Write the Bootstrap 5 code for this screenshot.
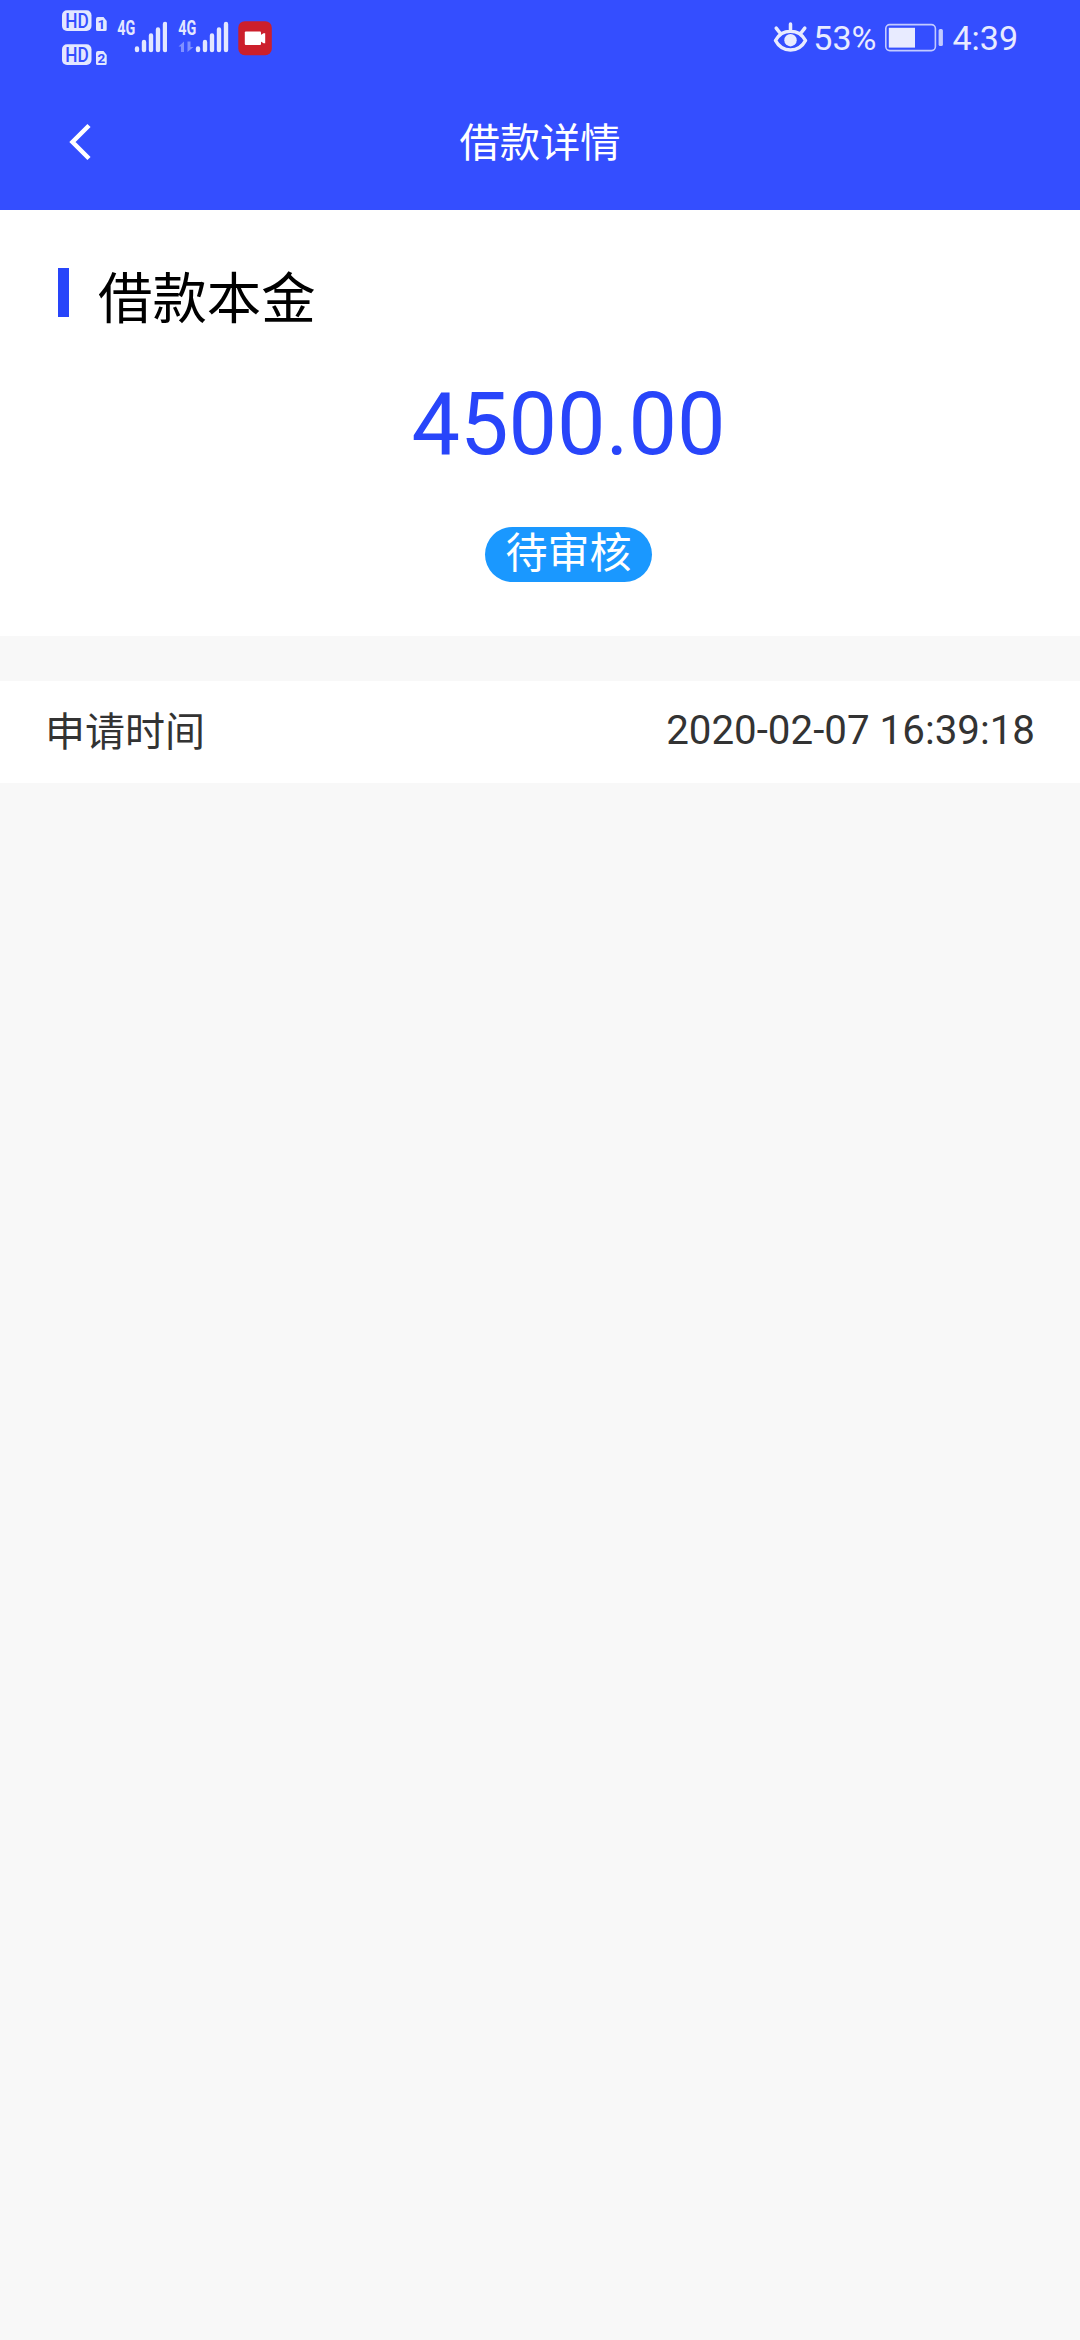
<!DOCTYPE html>
<html lang="zh-CN">
<head>
<meta charset="utf-8">
<meta name="viewport" content="width=device-width, initial-scale=1">
<title>借款详情</title>
<link href="https://cdn.jsdelivr.net/npm/bootstrap@5.3.0/dist/css/bootstrap.min.css" rel="stylesheet">
<style>
  body { background: #f8f8f8; font-family: Roboto, "Noto Sans CJK SC", sans-serif; }
  .zh { font-family: "Noto Sans CJK SC", sans-serif; font-weight: 400; }
  .app-head { background: #344eff; height: 210px; }
  .status-row { height: 76px; padding: 0 62px; color: #e8ebff; font-size: 34px; line-height: 76px; }
  .status-row svg { display: block; flex: none; }
  .pct { margin-left: 5px; }
  .cell { margin-left: 9px; }
  .clock { margin-left: 8px; }
  .title-row { height: 134px; display: grid; grid-template-columns: 140px 1fr 140px; }
  .title-row h1 { font-size: 40.3px; line-height: 127px; }
  .back-btn { padding: 0 0 0 69px; height: 132px; border: 0; }
  .loan-card { height: 426px; padding: 51px 0 0 57px; }
  .section-title { height: 72px; }
  .section-title .tick { width: 11px; height: 49px; margin: 7px 0 0 1px; background: #2845fa; }
  .section-title h2 { font-size: 54.4px; line-height: 67px; margin-left: 29px; }
  .amount { color: #2845fa; font-size: 86.4px; line-height: 98px; margin-top: 43px; }
  .state-pill { width: 167px; height: 55px; margin-top: 53px; background: #1a98ff; font-size: 42px; line-height: 45px; }
  .info-row { height: 102px; margin-top: 45px; padding: 0 45px; color: #333; font-size: 40.3px; line-height: 100px; }
  .info-row .zh { font-size: 40px; line-height: 96px; }
</style>
<script src="https://cdn.jsdelivr.net/npm/bootstrap@5.3.0/dist/js/bootstrap.bundle.min.js"></script>
</head>
<body>
<header class="app-head text-white">
  <div class="status-row d-flex align-items-center">
    <svg width="46" height="76" viewBox="62 0 46 76" font-family="Roboto, sans-serif" fill="#344eff">
      <g id="hd">
        <rect x="62" y="10.3" width="29.5" height="20.6" rx="5" fill="#e3e7ff"/>
        <path d="M98 17h5.500l3.200 4v8.500a1.500 1.500 0 0 1-1.500 1.500H97.500A1.500 1.500 0 0 1 96 29.500V19a2 2 0 0 1 2-2z" fill="#e3e7ff"/>
        <text x="65.200" y="27.600" font-size="19.500" font-weight="500" textLength="23.500" lengthAdjust="spacingAndGlyphs">HD</text>
      </g>
      <use href="#hd" y="34"/>
      <text x="97.600" y="29.200" font-size="13.500" font-weight="700">1</text>
      <text x="97.600" y="63.200" font-size="13.500" font-weight="700">2</text>
    </svg>
    <svg class="ms-2" width="51" height="76" viewBox="116 0 51 76" font-family="Roboto, sans-serif" fill="#e3e7ff">
      <text x="117.300" y="35.400" font-size="19.500" font-weight="700" textLength="18" lengthAdjust="spacingAndGlyphs">4G</text>
      <path d="M137 48.500v1.500M144 42v8M151 35.500v14.500M158 29.500v20.500M165 24v26" stroke="#e3e7ff" stroke-width="4.400" stroke-linecap="round"/>
    </svg>
    <svg width="62" height="76" viewBox="167 0 62 76" font-family="Roboto, sans-serif" fill="#e3e7ff">
      <text x="178.300" y="35.400" font-size="19.500" font-weight="700" textLength="18" lengthAdjust="spacingAndGlyphs">4G</text>
      <path d="M178.500 46.500l5.500-5V52h-3v-5.500zM187.500 41.500h3v5.500h3l-6 5z" fill="#7f90ff"/>
      <path d="M198 48.500v1.500M205 42v8M212 35.500v14.500M219 29.500v20.500M226 24v26" stroke="#e3e7ff" stroke-width="4.400" stroke-linecap="round"/>
    </svg>
    <svg width="44" height="76" viewBox="229 0 44 76">
      <rect x="238.300" y="21.200" width="33.500" height="34" rx="6.500" fill="#cc1f2b"/>
      <rect x="244.800" y="31.500" width="16.200" height="13.500" rx="1" fill="#fff"/>
      <path d="M260 35.500l3.500-2.300h1.700v10.100h-1.700L260 41z" fill="#fff"/>
    </svg>
    <svg class="ms-auto" width="35" height="76" viewBox="774 0 35 76" fill="none" stroke="#e8ebff" stroke-width="3.500" stroke-linecap="round" stroke-linejoin="round">
      <path d="M776.500 40.500C783 28 800 28 806.500 40.500C800 53 783 53 776.500 40.500zM791.500 30v-6M781 33l-3.800-4.800M802 33l3.800-4.800"/>
      <circle cx="791.500" cy="40.200" r="6.200" fill="#e8ebff" stroke="none"/>
    </svg>
    <span class="pct">53%</span>
    <svg class="cell" width="59" height="76" viewBox="886 0 59 76">
      <rect x="886.800" y="24.600" width="49.600" height="26" rx="4" fill="none" stroke="#c3cbff" stroke-width="1.600"/>
      <rect x="889.800" y="27.800" width="26.200" height="19.800" fill="#e8ebff"/>
      <rect x="939.600" y="29" width="4.300" height="17" rx="1.500" fill="#c3cbff"/>
    </svg>
    <span class="clock">4:39</span>
  </div>
  <div class="title-row">
    <button type="button" class="btn back-btn text-start" aria-label="返回">
      <svg class="d-block" width="23" height="38" viewBox="0 0 23 38" fill="none" stroke="#fff" stroke-width="4.500"><path d="M20 2.500L3.500 19L20 35.500"/></svg>
    </button>
    <h1 class="zh text-center m-0">借款详情</h1>
  </div>
</header>
<main>
  <section class="loan-card bg-white">
    <div class="section-title d-flex align-items-start">
      <span class="tick"></span>
      <h2 class="zh text-black mb-0">借款本金</h2>
    </div>
    <div class="amount text-center">4500.00</div>
    <div class="state-pill zh rounded-pill text-white text-center mx-auto">待审核</div>
  </section>
  <section class="info-row bg-white d-flex justify-content-between">
    <span class="zh">申请时间</span>
    <span>2020-02-07 16:39:18</span>
  </section>
</main>
</body>
</html>
